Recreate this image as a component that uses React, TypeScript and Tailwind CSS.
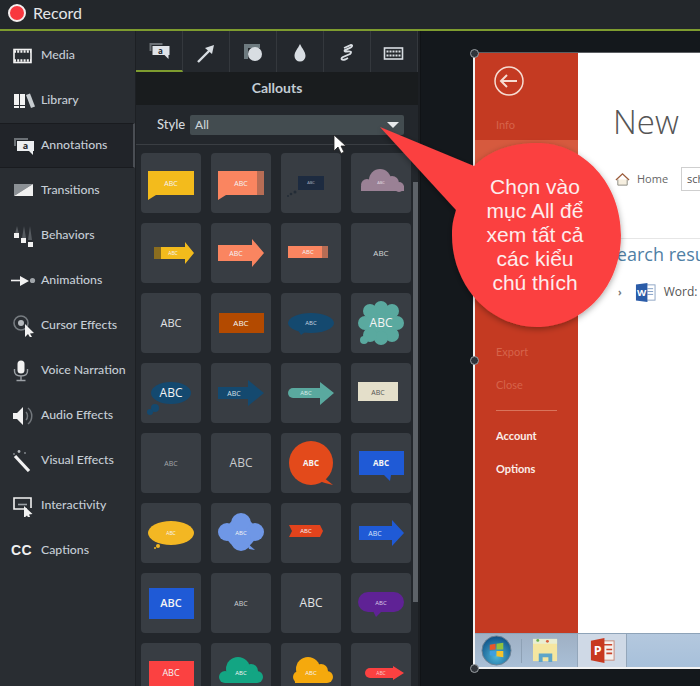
import type { ReactNode } from "react";

const FONT = "font-['Lato','Open_Sans',sans-serif]";

const Abc = ({ x = 30, y = 30, size = 7, fill = "#f4f4f4", weight = 400 }: { x?: number; y?: number; size?: number; fill?: string; weight?: number }) => (
  <text x={x} y={y} dy="0.36em" textAnchor="middle" fontSize={size} fill={fill} fontWeight={weight} fontFamily="'Open Sans', sans-serif">
    ABC
  </text>
);

const Arrow = ({ x0, x1, x2, t, b, ht, hb, fill }: { x0: number; x1: number; x2: number; t: number; b: number; ht: number; hb: number; fill: string }) => (
  <path d={`M${x0} ${t}H${x1}V${ht}L${x2} ${(t + b) / 2}L${x1} ${hb}V${b}H${x0}Z`} fill={fill} />
);

// [cx, cy, r] lists for the cloud shapes
const Cloud = ({ parts, fill }: { parts: number[][]; fill: string }) => (
  <g fill={fill}>
    {parts.map(([cx, cy, r]) => (
      <circle key={`${cx}-${cy}`} cx={cx} cy={cy} r={r} />
    ))}
  </g>
);

const tiles: ReactNode[] = [
  <>
    <path d="M7 18H53V42H15L7 47Z" fill="#f3bb1c" />
    <Abc y={30} size={7} />
  </>,
  <>
    <path d="M7 18H46V42H15L7 47Z" fill="#fa8560" />
    <rect x="46" y="18" width="7" height="24" fill="#b76d55" />
    <Abc x={30} y={30} size={7} />
  </>,
  <>
    <rect x="17" y="23" width="26" height="14" fill="#1d2b40" />
    <circle cx="14" cy="39" r="1.5" fill="#232c36" />
    <circle cx="10" cy="41" r="1.3" fill="#232c36" />
    <circle cx="7" cy="43" r="1" fill="#232c36" />
    <Abc size={4} fill="#aeb6c2" />
  </>,
  <>
    <Cloud fill="#9a8195" parts={[[29, 27, 11], [16, 32, 6], [41, 30, 7], [48, 34, 5]]} />
    <rect x="10" y="33" width="43" height="5" fill="#9a8195" />
    <Abc y={30} size={4} fill="#e6dfe4" />
  </>,

  <>
    <rect x="13" y="24" width="8" height="12" fill="#8a6d1f" />
    <Arrow x0={20} x1={44} x2={53} t={24} b={36} ht={19} hb={41} fill="#f3bb1c" />
    <Abc x={32} size={5} />
  </>,
  <>
    <Arrow x0={7} x1={41} x2={53} t={22} b={38} ht={16} hb={44} fill="#fa8560" />
    <Abc x={25} size={7} />
  </>,
  <>
    <rect x="7" y="23" width="34" height="12" fill="#fa8560" />
    <rect x="41" y="23" width="6" height="12" fill="#b76d55" />
    <Abc x={27} y={29} size={6} />
  </>,
  <Abc size={8} fill="#d2d5d8" />,

  <Abc size={11} fill="#e2e4e6" />,
  <>
    <rect x="8" y="20" width="45" height="20" fill="#b34a00" />
    <Abc size={8} />
  </>,
  <>
    <ellipse cx="30" cy="30" rx="23" ry="10" fill="#14496f" />
    <path d="M17 37L20 42L24 39Z" fill="#14496f" />
    <Abc size={6} fill="#c7d6e0" />
  </>,
  <>
    <Cloud fill="#5aa99f" parts={[[30, 30, 16], [30, 15, 7], [41, 18, 7], [46, 30, 7], [41, 42, 7], [30, 45, 7], [19, 42, 7], [14, 30, 7], [19, 18, 7], [13, 47, 4]]} />
    <Abc size={12} />
  </>,

  <>
    <ellipse cx="30" cy="30" rx="20" ry="11" fill="#14496f" />
    <circle cx="14" cy="45" r="4" fill="#14496f" />
    <circle cx="9" cy="49" r="3" fill="#14496f" />
    <Abc size={12} />
  </>,
  <>
    <Arrow x0={7} x1={37} x2={53} t={24} b={36} ht={17} hb={43} fill="#14496f" />
    <Abc x={23} size={7} fill="#d6e1e8" />
  </>,
  <>
    <rect x="7" y="25" width="10" height="10" rx="5" fill="#5aa99f" />
    <Arrow x0={12} x1={39} x2={53} t={25} b={35} ht={19} hb={42} fill="#5aa99f" />
    <Abc x={25} size={6} fill="#d8ece9" />
  </>,
  <>
    <rect x="7" y="19" width="40" height="19" fill="#e4dfca" />
    <Abc x={27} y={29} size={7} fill="#555" />
  </>,

  <Abc size={7} fill="#a2a6aa" />,
  <Abc size={12} fill="#c8cbce" />,
  <>
    <circle cx="30" cy="30" r="22" fill="#e34a1b" />
    <path d="M42 44L52 52L44 50L38 48Z" fill="#e34a1b" />
    <Abc size={8} weight={700} />
  </>,
  <>
    <path d="M8 18H53V42H40L39 48L33 42H8Z" fill="#1f5ad6" />
    <Abc size={8} weight={700} />
  </>,

  <>
    <ellipse cx="30" cy="30" rx="23" ry="12" fill="#f3b723" />
    <circle cx="17" cy="43" r="2" fill="#f3b723" />
    <circle cx="14" cy="45" r="1" fill="#f3b723" />
    <Abc size={5} />
  </>,
  <>
    <Cloud fill="#6f97e6" parts={[[30, 30, 15], [30, 20, 10], [16, 29, 9], [44, 29, 9], [30, 38, 10]]} />
    <path d="M36 40L44 47L38 46Z" fill="#6f97e6" />
    <Abc size={6} />
  </>,
  <>
    <path d="M8 22H39L42 28L39 34H8L11 28Z" fill="#e2431c" />
    <Abc x={25} y={28} size={6} />
  </>,
  <>
    <Arrow x0={8} x1={41} x2={53} t={23} b={37} ht={17} hb={43} fill="#1f5ad6" />
    <Abc x={24} size={7} fill="#d8e3fb" />
  </>,

  <>
    <rect x="8" y="15" width="45" height="31" fill="#1f5ad6" />
    <Abc size={11} weight={600} />
  </>,
  <Abc size={7} fill="#ced1d4" />,
  <Abc size={12} fill="#e2e4e6" />,
  <>
    <rect x="7" y="19" width="46" height="20" rx="10" fill="#5f2295" />
    <path d="M22 38L25 44L31 38Z" fill="#5f2295" />
    <Abc size={6} fill="#d9cbe7" />
  </>,

  <>
    <rect x="8" y="18" width="45" height="26" fill="#fb4141" />
    <Abc size={9} />
  </>,
  <>
    <Cloud fill="#13a583" parts={[[27, 26, 12], [14, 34, 6], [40, 28, 7], [46, 34, 6]]} />
    <rect x="14" y="32" width="32" height="8" fill="#13a583" />
    <Abc size={6} />
  </>,
  <>
    <Cloud fill="#f5a90d" parts={[[27, 26, 12], [18, 34, 6], [40, 28, 7], [46, 34, 6]]} />
    <rect x="14" y="32" width="32" height="8" fill="#f5a90d" />
    <Abc size={6} />
  </>,
  <>
    <rect x="14" y="25" width="10" height="10" rx="5" fill="#fb4141" />
    <Arrow x0={19} x1={42} x2={53} t={25} b={35} ht={23} hb={37} fill="#fb4141" />
    <Abc x={30} size={5} fill="#f7c9c9" />
  </>,
];

const ic = "w-[26px] h-[22px] shrink-0";

const navItems: { label: string; active?: boolean; icon: ReactNode }[] = [
  {
    label: "Media",
    icon: (
      <svg viewBox="0 0 26 22" className={ic}>
        <rect x="3" y="4.5" width="17" height="13" fill="none" stroke="#f2f2f2" strokeWidth="1.6" />
        <path d="M3 6.5H20M3 15.500H20" stroke="#f2f2f2" strokeWidth="2.6" strokeDasharray="2 1.2" />
      </svg>
    ),
  },
  {
    label: "Library",
    icon: (
      <svg viewBox="0 0 26 22" className={ic}>
        <path d="M3 4H8V18H3ZM9 4H14V18H9Z" fill="#f2f2f2" />
        <path d="M15 5L19 3.5L24 16.5L20 18Z" fill="#c7ccd0" />
        <path d="M3 15.5H14" stroke="#292d32" />
      </svg>
    ),
  },
  {
    label: "Annotations",
    active: true,
    icon: (
      <svg viewBox="0 0 26 22" className={ic}>
        <path d="M3 3H17V5H5V11H3Z" fill="#6b7075" />
        <path d="M6 6H23V16H22V20L18 16H6Z" fill="#eceef0" />
        <text x="14.5" y="14" textAnchor="middle" fontSize="9" fontWeight="700" fill="#23272b" fontFamily="'Open Sans', sans-serif">a</text>
      </svg>
    ),
  },
  {
    label: "Transitions",
    icon: (
      <svg viewBox="0 0 26 22" className={ic}>
        <path d="M3 4H22L3 16Z" fill="#8b9095" />
        <path d="M22 4V16H3Z" fill="#f0f0f0" />
      </svg>
    ),
  },
  {
    label: "Behaviors",
    icon: (
      <svg viewBox="0 0 26 22" className={ic}>
        <path d="M6 1L8 9H4ZM13 1L15 13H11ZM19 1L21 15H17Z" fill="#565b60" />
        <rect x="3" y="8" width="5" height="5" fill="#f2f2f2" />
        <rect x="10" y="13" width="5" height="5" fill="#f2f2f2" />
        <rect x="17" y="17" width="5" height="5" fill="#f2f2f2" />
      </svg>
    ),
  },
  {
    label: "Animations",
    icon: (
      <svg viewBox="0 0 26 22" className={ic}>
        <path d="M0 10.5H11" stroke="#f2f2f2" strokeWidth="1.6" />
        <path d="M9 6L18 11L9 16Z" fill="#f2f2f2" />
        <circle cx="21.5" cy="10.5" r="2.6" fill="#a0a5aa" />
      </svg>
    ),
  },
  {
    label: "Cursor Effects",
    icon: (
      <svg viewBox="0 0 26 22" className={ic}>
        <circle cx="10" cy="8" r="7" fill="none" stroke="#777c81" strokeWidth="1.6" />
        <circle cx="10" cy="8" r="3" fill="#b5b9bd" />
        <path d="M14 9V22L17 19L19.5 23L21 22L19 18.5L23 18Z" fill="#f2f2f2" />
      </svg>
    ),
  },
  {
    label: "Voice Narration",
    icon: (
      <svg viewBox="0 0 26 22" className={ic}>
        <rect x="6.5" y="0.5" width="7" height="13" rx="3.5" fill="#f2f2f2" />
        <path d="M3.5 9V11C3.5 14.5 6.5 16 10 16C13.5 16 16.5 14.5 16.5 11V9M10 16V20M5.5 20.5H14.5" fill="none" stroke="#9ca1a6" strokeWidth="1.4" />
      </svg>
    ),
  },
  {
    label: "Audio Effects",
    icon: (
      <svg viewBox="0 0 26 22" className={ic}>
        <path d="M2 8H6L12 2V20L6 14H2Z" fill="#f2f2f2" />
        <path d="M15 7C17 9 17 13 15 15M17 3C22 7 22 15 17 19" fill="none" stroke="#73787d" strokeWidth="1.5" />
      </svg>
    ),
  },
  {
    label: "Visual Effects",
    icon: (
      <svg viewBox="0 0 26 22" className={ic}>
        <path d="M4 6L18 21" stroke="#f2f2f2" strokeWidth="3.2" />
        <circle cx="8" cy="1.5" r="1.4" fill="#b5b9bd" />
        <circle cx="14" cy="3" r="0.9" fill="#8a8f94" />
        <circle cx="3" cy="4" r="0.9" fill="#8a8f94" />
      </svg>
    ),
  },
  {
    label: "Interactivity",
    icon: (
      <svg viewBox="0 0 26 22" className={ic}>
        <path d="M16 14H3V3H20V13" fill="none" stroke="#f2f2f2" strokeWidth="1.6" />
        <path d="M7 9.5H16" stroke="#9ca1a6" strokeWidth="1.6" />
        <path d="M13 11V23L16 20.5L18 24L19.5 23L18 19.500L21.5 19Z" fill="#f2f2f2" />
      </svg>
    ),
  },
  {
    label: "Captions",
    icon: (
      <span className="w-[26px] h-[22px] shrink-0 flex items-center font-['Liberation_Sans',sans-serif] font-bold text-[14px] tracking-[0.5px] text-[#f0f0f0]">CC</span>
    ),
  },
];

const tabIcons: ReactNode[] = [
  <svg key="callout" viewBox="-1.5 0 22 22" className="w-[22px] h-[22px]">
    <path d="M0 2H13V4H2V10H0Z" fill="#6b7075" />
    <path d="M3 5H20V14H19V18L15 14H3Z" fill="#dfe3e8" />
    <text x="11" y="12.5" textAnchor="middle" fontSize="8" fontWeight="700" fill="#23272b" fontFamily="'Open Sans', sans-serif">a</text>
  </svg>,
  <svg key="arrow" viewBox="0 0 22 22" className="w-[22px] h-[22px]">
    <path d="M3 20L15 8" stroke="#d8dde2" strokeWidth="2.4" />
    <path d="M10 6L19 3L17 12Z" fill="#d8dde2" />
  </svg>,
  <svg key="shape" viewBox="0 0 22 22" className="w-[22px] h-[22px]">
    <path d="M2 2H18V6H6V17H2Z" fill="#6e7b80" />
    <circle cx="13" cy="12" r="7" fill="#d8dde2" />
  </svg>,
  <svg key="drop" viewBox="0 0 22 22" className="w-[22px] h-[22px]">
    <path d="M11 2C13 6.500 16.5 9.500 16.5 14A5.500 5.500 0 0 1 5.500 14C5.500 9.500 9 6.500 11 2Z" fill="#d8dde2" />
  </svg>,
  <svg key="sketch" viewBox="0 0 22 22" className="w-[22px] h-[22px]">
    <path d="M8 6L15 3C17 3 16 5 14 6L9 8C8 9 9 10 11 9.500C15 9 16 10 14 12L7 15C4 17 6 18.500 9 17.500L12 16" fill="none" stroke="#d8dde2" strokeWidth="1.9" />
  </svg>,
  <svg key="keys" viewBox="0 0 22 22" className="w-[22px] h-[22px]">
    <rect x="1.5" y="6" width="18" height="11" fill="none" stroke="#d8dde2" strokeWidth="1.6" />
    <path d="M3.500 9.500H17.500M3.500 13.500H17.500" stroke="#d8dde2" strokeWidth="2" strokeDasharray="2 1" />
  </svg>,
];

const Handle = ({ top }: { top: number }) => (
  <span style={{ top }} className="absolute left-[470px] w-[9px] h-[9px] rounded-full bg-[#30343a] border border-[#9ba0a5]" />
);

const Sidebar = () => (
  <nav className={`w-[136px] shrink-0 bg-[#292d32] border-r border-[#1d2024] pt-[2px] ${FONT}`}>
    {navItems.map((item) => (
      <div
        key={item.label}
        className={`h-[45px] flex items-center gap-[3px] pl-[11px] text-[12.3px] font-medium text-[#c6ced6] ${item.active ? "bg-[#212429] border-y border-[#191b1f] border-r-2 border-r-[#4a4e54]" : ""}`}
      >
        {item.icon}
        <span className="pl-px whitespace-nowrap">{item.label}</span>
      </div>
    ))}
  </nav>
);

const Panel = () => (
  <section className={`relative w-[284px] shrink-0 flex flex-col bg-[#23272c] border-r-2 border-[#1c1f23] ${FONT}`}>
    <div className="h-[41px] shrink-0 flex bg-[#24282d]">
      {tabIcons.map((icon, i) => (
        <div key={i} className={`w-[47px] flex items-center justify-center pt-[2px] border-r border-[#34383d] ${i === 0 ? "border-b-2 border-b-[#7e9c2f]" : ""}`}>
          {icon}
        </div>
      ))}
    </div>
    <div className="h-[33px] shrink-0 bg-[#191c1e] flex items-center justify-center pb-[2px] text-[14px] font-bold text-[#c3ccd4]">Callouts</div>
    <div className="h-[40px] shrink-0 flex items-center pl-[21px] border-b border-[#3a3e43] text-[13px] text-[#d3d8dc]">
      <span className="w-[33px] font-medium">Style</span>
      <div className="w-[214px] h-[20px] rounded-[2px] bg-[#434c50] flex items-center justify-between pl-[5px] pr-[5px] text-[12px] font-medium text-[#cbd2d6]">
        All
        <span className="w-0 h-0 border-x-[6px] border-x-transparent border-t-[6px] border-t-[#e8eaec]" />
      </div>
    </div>
    <div className="flex-1 overflow-hidden grid grid-cols-[repeat(4,60px)] auto-rows-[60px] gap-[10px] pl-[5px] pt-[8px]">
      {tiles.map((tile, i) => (
        <div key={i} className="w-[60px] h-[60px] rounded-[4px] bg-[#383d43]">
          <svg viewBox="0 0 60 60" className="w-[60px] h-[60px]">
            {tile}
          </svg>
        </div>
      ))}
    </div>
    <span className="absolute left-[277px] top-[151px] w-[5px] h-[420px] bg-[#5d6268]" />
  </section>
);

const Taskbar = () => (
  <div className="h-[34px] shrink-0 flex items-stretch bg-gradient-to-b from-[#b4c8de] to-[#a7c0da] border-t border-[#8ea3b8]">
    <div className="w-[103px] flex items-center pl-[6px] gap-[9px] bg-gradient-to-b from-[#9fb0c4] to-[#a9bfd6]">
      <svg viewBox="0 0 32 32" className="w-[31px] h-[31px]">
        <defs>
          <radialGradient id="orb" cx="50%" cy="70%" r="70%">
            <stop offset="0" stopColor="#4fb6d8" />
            <stop offset="1" stopColor="#0d4f86" />
          </radialGradient>
        </defs>
        <circle cx="16" cy="16" r="15" fill="url(#orb)" stroke="#6d8193" />
        <path d="M9 10L15 9V15L9 15.500Z" fill="#e8562a" />
        <path d="M16 9L23 8V15H16Z" fill="#8fc23f" />
        <path d="M9 16.500H15V22L9 21Z" fill="#3f9fe0" />
        <path d="M16 16.500H23V23L16 22Z" fill="#f5c32c" />
      </svg>
      <span className="w-px h-[24px] bg-[#8ea1b5]" />
      <svg viewBox="0 0 30 28" className="w-[29px] h-[27px]">
        <path d="M2 2H27V25H2Z" fill="#f5e6a0" />
        <path d="M2 2H27V7H2Z" fill="#e9eed2" />
        <circle cx="7" cy="3.500" r="1.500" fill="#6ab04c" />
        <circle cx="17" cy="4.500" r="1.500" fill="#d9603b" />
        <path d="M8 17H22V26H18V21H12V26H8Z" fill="#5fa5c9" />
      </svg>
    </div>
    <div className="w-[50px] ml-[-1px] flex items-center justify-center bg-[#cfd9e6] border-x border-[#93a6ba]">
      <svg viewBox="0 0 28 28" className="w-[27px] h-[27px]">
        <rect x="10" y="4" width="16" height="20" fill="#f4f1ef" stroke="#c9897a" />
        <path d="M15 8H24M18 13H24M18 17H24" stroke="#c9432a" strokeWidth="1.6" />
        <path d="M2 4L16 1V27L2 24Z" fill="#c8391f" />
        <text x="9" y="19" textAnchor="middle" fontSize="13" fontWeight="700" fill="#fff" fontFamily="'Open Sans', sans-serif">P</text>
      </svg>
    </div>
    <div className="flex-1" />
  </div>
);

const Preview = () => (
  <div className="h-[617px] w-[300px] flex flex-col border-l-2 border-b-2 border-t border-[#f2f2f2] border-t-[#5c5f63] bg-white font-['Open_Sans',sans-serif]">
    <div className="flex-1 flex min-h-0">
      <div className="w-[103px] shrink-0 flex flex-col bg-[#c43a22] font-['Lato','Open_Sans',sans-serif] text-[11px]">
        <div className="h-[87px] pl-[19px] pt-[13px]">
          <svg viewBox="0 0 30 30" className="w-[30px] h-[30px]">
            <circle cx="15" cy="15" r="14" fill="none" stroke="#f6dcd2" strokeWidth="1.5" />
            <path d="M7.500 15H23M13 9L7 15L13 21" fill="none" stroke="#f6dcd2" strokeWidth="2" />
          </svg>
          <div className="mt-[21px] pl-[2px] text-[#d6634a]">Info</div>
        </div>
        <div className="h-[40px] bg-[#d65a3e]" />
        <div className="mt-[164px] pl-[21px] text-[#d6634a]">Export</div>
        <div className="mt-[16px] pl-[21px] text-[#d6634a]">Close</div>
        <div className="mt-[17px] mx-[21px] w-[61px] h-px bg-[#d9745c]" />
        <div className="mt-[17px] pl-[21px] font-bold text-[#fbeee9]">Account</div>
        <div className="mt-[16px] pl-[21px] font-bold text-[#fbeee9]">Options</div>
      </div>
      <div className="flex-1 min-w-0">
        <div className="pl-[35px] pt-[44px] text-[33px] leading-[50px] font-light text-[#555]">New</div>
        <div className="mt-[20px] pl-[37px] flex items-center h-[24px] text-[11px] text-[#666]">
          <svg viewBox="0 0 16 16" className="w-[15px] h-[15px]">
            <path d="M3 8V14H13V8" fill="#f6efe0" stroke="#8a8a80" />
            <path d="M1 8.500L8 2L15 8.500" fill="none" stroke="#9b5b3a" strokeWidth="1.4" />
          </svg>
          <span className="ml-[7px]">Home</span>
          <span className="ml-[13px] h-[24px] w-[60px] pl-[5px] border border-[#cfcfcf] leading-[22px] text-[#555]">sch</span>
        </div>
        <div className="mt-[47px] pt-[3px] border-t border-[#e6e6e6] pl-[29px] text-[18px] leading-[24px] text-[#4f80a5] whitespace-nowrap">Search results</div>
        <div className="mt-[15px] pl-[40px] flex items-center h-[22px] text-[12px] text-[#555]">
          <span className="text-[10px] font-bold text-[#777]">›</span>
          <svg viewBox="0 0 22 22" className="ml-[13px] w-[21px] h-[21px]">
            <rect x="8" y="3" width="13" height="16" fill="#fff" stroke="#8da4c4" />
            <path d="M13 7H19M13 10H19M13 13H19" stroke="#7f9cc4" />
            <path d="M1 2.500L13 1V21L1 19.500Z" fill="#2b5ca8" />
            <text x="7" y="15" textAnchor="middle" fontSize="10" fontWeight="700" fill="#fff">W</text>
          </svg>
          <span className="ml-[8px]">Word:</span>
        </div>
      </div>
    </div>
    <Taskbar />
  </div>
);

const App = () => (
  <div className="relative w-[700px] h-[686px] overflow-hidden flex flex-col bg-[#14181c]">
    <header className={`h-[31px] shrink-0 flex items-center gap-[7px] pl-[8px] pb-[4px] bg-[#23272b] border-b-2 border-[#7e9c2f] text-[16px] text-[#e4e6e8] ${FONT}`}>
      <span className="w-[18px] h-[18px] rounded-full bg-[#f8373f] border-2 border-[#f4eeee]" />
      Record
    </header>
    <main className="flex-1 flex min-h-0">
      <Sidebar />
      <Panel />
      <div className="flex-1 overflow-hidden pl-[52px] pt-[21px] bg-[#14181c] border-l border-[#101316]">
        <Preview />
      </div>
    </main>

    <Handle top={49} />
    <Handle top={356} />
    <Handle top={664} />

    {/* callout over the preview */}
    <svg viewBox="0 0 700 686" className="absolute inset-0 w-[700px] h-[686px] pointer-events-none">
      <defs>
        <filter id="sh" x="-20%" y="-20%" width="140%" height="140%">
          <feDropShadow dx="0" dy="2" stdDeviation="3" floodColor="#000" floodOpacity="0.35" />
        </filter>
      </defs>
      <path
        d="M380 127L474 166C490 150 512 143 537 143C584 143 621 184 621 235C621 286 584 327 537 327C490 327 452 286 452 235C452 222 454 218 456 210Z"
        fill="#fb4141"
        filter="url(#sh)"
      />
      <path d="M334 135V151L338 147L341 153.500L344 152L341 146H346Z" fill="#fff" stroke="#222" strokeWidth="0.8" />
    </svg>
    <div className="absolute left-[450px] top-[175px] w-[170px] text-center font-['Liberation_Sans',sans-serif] text-[21px] leading-[24px] text-[#fdecec]">
      Chọn vào
      <br />
      mục All để
      <br />
      xem tất cả
      <br />
      các kiểu
      <br />
      chú thích
    </div>
  </div>
);

export default App;
